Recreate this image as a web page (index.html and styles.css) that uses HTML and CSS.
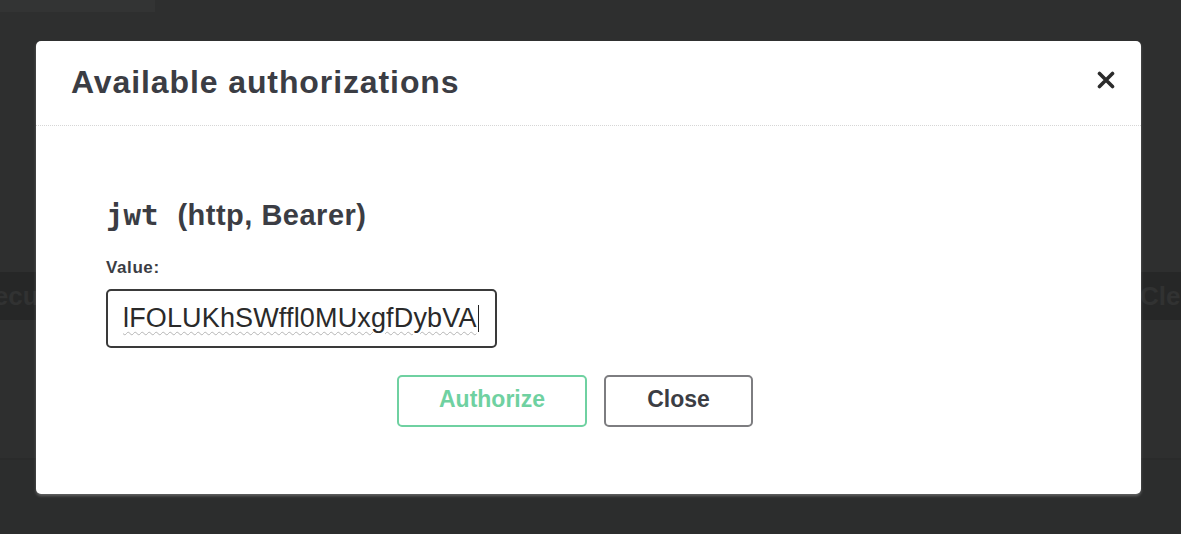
FILE: index.html
```html
<!DOCTYPE html>
<html>
<head>
<meta charset="utf-8">
<link rel="stylesheet" href="styles.css">
</head>
<body>
<div class="page">
  <div class="topstrip"></div>
  <div class="spacer-a"></div>
  <div class="bg-row">
    <span class="bg-btn bg-left">Execute</span>
    <span class="bg-btn bg-right">Clear</span>
  </div>
  <div class="spacer-b"></div>
  <div class="bg-lower"></div>
</div>

<div class="modal">
  <div class="modal-header">
    <h3 class="modal-title">Available authorizations</h3>
    <button class="close-x" aria-label="close">
      <svg width="18" height="18" viewBox="0 0 18 18"><path d="M2.5 2.5 L15.5 15.5 M15.5 2.5 L2.5 15.5" stroke="#2b2b2b" stroke-width="3.6" stroke-linecap="round"/></svg>
    </button>
  </div>
  <div class="modal-body">
    <h4 class="scheme"><code class="scheme-name">jwt</code><span class="scheme-type">(http, Bearer)</span></h4>
    <label class="value-label">Value:</label>
    <div class="value-input"><span class="value-text">lFOLUKhSWffl0MUxgfDybVA</span><span class="caret"></span></div>
    <div class="btn-row">
      <button class="btn btn-auth">Authorize</button>
      <button class="btn btn-close">Close</button>
    </div>
  </div>
</div>
</body>
</html>
```

FILE: styles.css
```css
html, body {
  margin: 0;
  padding: 0;
}
body {
  width: 1181px;
  height: 534px;
  overflow: hidden;
  background: #2e2f2f;
  font-family: "Liberation Sans", Arial, sans-serif;
  position: relative;
}
.page {
  display: flex;
  flex-direction: column;
  height: 534px;
}
.topstrip {
  height: 12px;
  width: 155px;
  background: #333434;
}
.spacer-a {
  height: 260px;
}
.bg-row {
  height: 48px;
  background: #262727;
  display: flex;
  justify-content: space-between;
  align-items: center;
  overflow: hidden;
}
.bg-btn {
  font-weight: bold;
  font-size: 26px;
  color: #313232;
}
.bg-left {
  margin-left: -38px;
}
.bg-right {
  margin-right: -24px;
}
.spacer-b {
  height: 138px;
}
.bg-lower {
  flex: 1;
  border-top: 2px solid #2a2b2b;
  background: #2c2d2d;
}

.modal {
  position: absolute;
  left: 36px;
  top: 41px;
  width: 1105px;
  height: 453px;
  background: #fff;
  border-radius: 5px;
  box-shadow: 0 2px 3px rgba(200,200,200,0.35);
  display: flex;
  flex-direction: column;
}
.modal-header {
  height: 85px;
  box-sizing: border-box;
  border-bottom: 1px dotted #d6d6d6;
  display: flex;
  align-items: center;
  justify-content: space-between;
  padding: 0 26px 0 35px;
}
.modal-title {
  margin: 0;
  font-size: 32px;
  letter-spacing: 0.9px;
  font-weight: bold;
  color: #3b3d44;
  padding-bottom: 1px;
}
.close-x {
  border: none;
  background: none;
  padding: 0;
  width: 18px;
  height: 18px;
  display: flex;
  margin-top: -6px;
}
.modal-body {
  padding: 0 97px 0 70px;
  display: flex;
  flex-direction: column;
}
.scheme {
  margin: 72px 0 0 0;
  font-size: 29px;
  font-weight: bold;
  color: #3b3d44;
  line-height: 34px;
  display: flex;
  align-items: baseline;
  gap: 19px;
}
.scheme-type {
  letter-spacing: 0.5px;
}
.scheme-name {
  font-family: "DejaVu Sans Mono", monospace;
  font-size: 29px;
  font-weight: bold;
}
.value-label {
  margin-top: 26px;
  font-size: 17px;
  letter-spacing: 0.6px;
  font-weight: bold;
  color: #3b3d44;
  line-height: 20px;
}
.value-input {
  margin-top: 11px;
  width: 391px;
  height: 59px;
  box-sizing: border-box;
  border: 2.5px solid #3a3a3a;
  border-radius: 5px;
  display: flex;
  align-items: center;
  padding-left: 15px;
}
.value-text {
  font-size: 27px;
  color: #2a2a2a;
  text-decoration: underline wavy #b5b5b5 1px;
  text-underline-offset: 4px;
  letter-spacing: 0.15px;
}
.caret {
  width: 1.5px;
  height: 27px;
  background: #222;
  margin-left: 1px;
}
.btn-row {
  margin-top: 27px;
  display: flex;
  justify-content: center;
  gap: 17px;
}
.btn {
  height: 52px;
  border-radius: 5px;
  background: #fff;
  font-family: "Liberation Sans", Arial, sans-serif;
  font-size: 23px;
  font-weight: bold;
  padding: 0 0 3px 0;
}
.btn-auth {
  width: 190px;
  border: 2.5px solid #6fd1a1;
  color: #6fd1a1;
}
.btn-close {
  width: 149px;
  border: 2.5px solid #7d7d80;
  color: #3b3d44;
}
```
